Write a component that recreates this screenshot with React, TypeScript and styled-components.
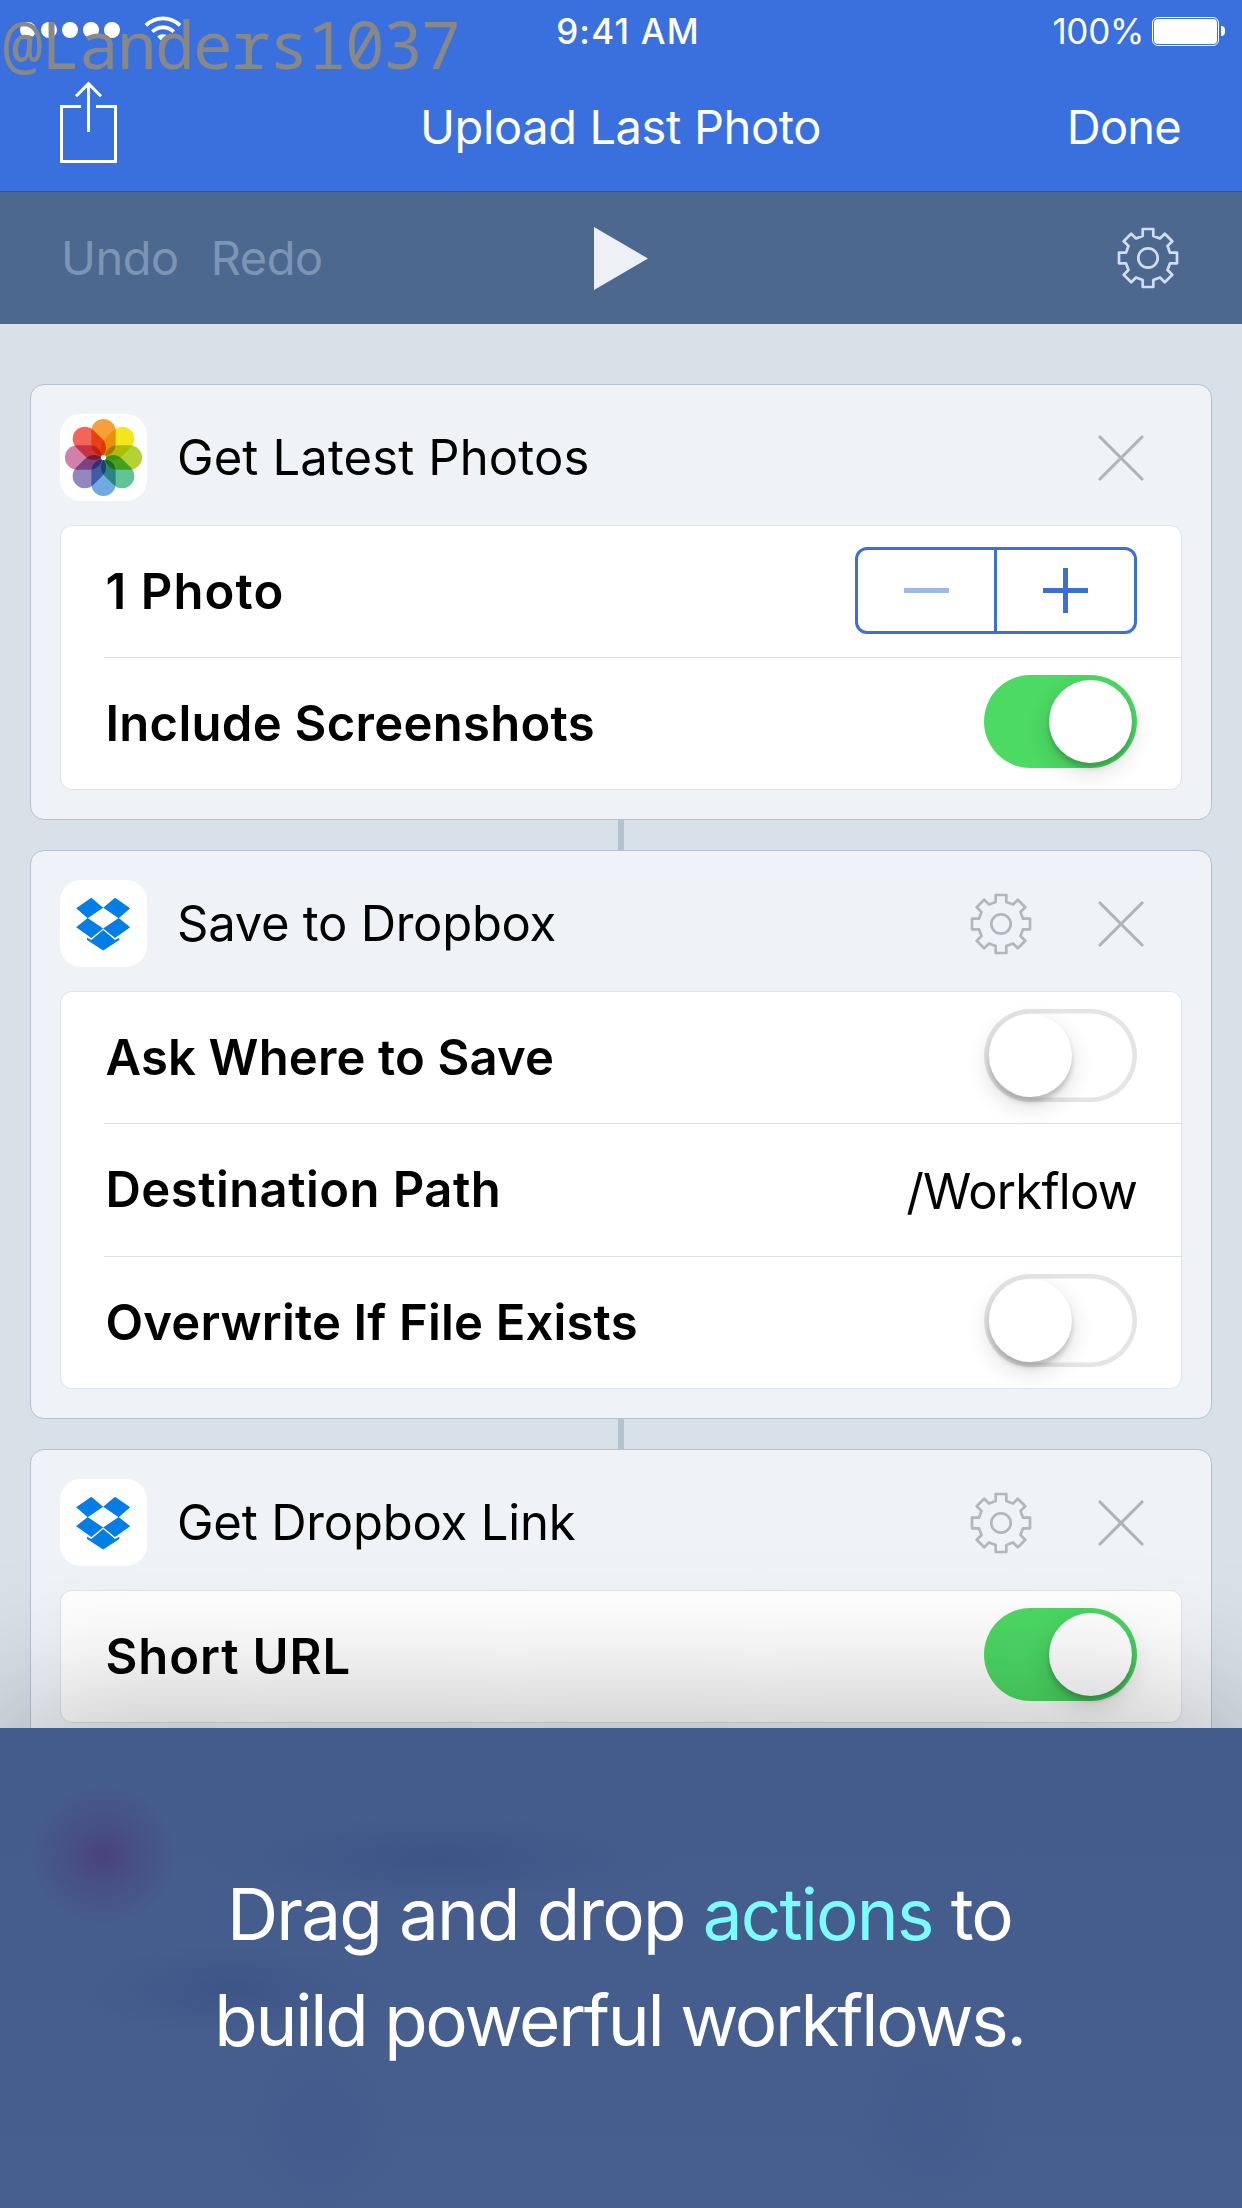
import React from 'react';
import styled, { createGlobalStyle } from 'styled-components';

const GlobalStyle = createGlobalStyle`
  *, *::before, *::after { box-sizing: border-box; }
  body {
    margin: 0;
    background: #d8e0e8;
    font-family: Inter, "Liberation Sans", sans-serif;
    color: #000;
  }
`;

const Screen = styled.div`
  position: relative;
  display: flex;
  flex-direction: column;
  width: 1242px;
  height: 2208px;
  overflow: hidden;
  background: #d8e0e8;
`;

const Header = styled.header`
  flex: none;
  height: 192px;
  display: flex;
  flex-direction: column;
  background: #3a70dd;
  border-bottom: 1px solid #2159b4;
  color: #fff;
`;

const StatusBar = styled.div`
  height: 62px;
  display: grid;
  grid-template-columns: 1fr auto 1fr;
  align-items: center;
  padding: 0 17px 0 20px;
  font-size: 35px;
  line-height: 44px;
`;

const Signal = styled.div`
  display: flex;
  align-items: center;
  gap: 5px;
  padding-bottom: 2px;
`;

const Dot = styled.span`
  width: 16px;
  height: 16px;
  border-radius: 50%;
  background: #fff;
`;

const WifiIcon = styled.svg`
  display: block;
  margin: 0 0 2px 19px;
`;

const Time = styled.div`
  padding-left: 11px;
  font-weight: 500;
  letter-spacing: 1.2px;
`;

const Power = styled.div`
  justify-self: end;
  display: flex;
  align-items: center;
  letter-spacing: -0.3px;
`;

const Battery = styled.span`
  width: 67px;
  height: 29px;
  margin-left: 8px;
  padding: 1px;
  border: 1px solid #fff;
  border-radius: 6px;
  display: flex;
`;

const BatteryFill = styled.span`
  flex: 1;
  border-radius: 4px;
  background: #fff;
`;

const BatteryCap = styled.span`
  width: 4px;
  height: 10px;
  margin-left: 2px;
  border-radius: 0 5px 5px 0;
  background: #fff;
`;

const NavBar = styled.div`
  flex: 1;
  display: grid;
  grid-template-columns: 1fr auto 1fr;
  align-items: center;
  padding: 0 61px 0 60px;
  font-size: 47px;
  line-height: 60px;
`;

const ShareIcon = styled.svg`
  display: block;
  margin-bottom: 9px;
`;

const NavTitle = styled.h1`
  margin: 0;
  font-size: inherit;
  font-weight: 400;
  letter-spacing: -0.38px;
`;

const DoneButton = styled.button`
  justify-self: end;
  padding: 0;
  border: 0;
  background: none;
  color: #fff;
  font: inherit;
  letter-spacing: -0.75px;
`;

const Toolbar = styled.div`
  flex: none;
  height: 132px;
  display: grid;
  grid-template-columns: 1fr auto 1fr;
  align-items: center;
  padding: 0 63px 0 61px;
  background: #4d688e;
`;

const History = styled.div`
  display: flex;
  gap: 32px;
`;

const HistoryButton = styled.button`
  padding: 0;
  border: 0;
  background: none;
  color: #7c95b5;
  font: inherit;
  font-size: 47px;
  line-height: 60px;
  letter-spacing: -0.5px;
`;

const PlayIcon = styled.svg`
  display: block;
  margin-left: 2px;
`;

const ToolbarEnd = styled.div`
  justify-self: end;
`;

const Glyph = styled.svg`
  display: block;
  flex: none;
`;

const Flow = styled.main`
  flex: none;
  display: flex;
  flex-direction: column;
  align-items: center;
  padding: 60px 30px;
`;

const Connector = styled.div`
  width: 6px;
  height: 30px;
  background: #b4c2cc;
`;

const Card = styled.section`
  width: 100%;
  padding: 0 29px 29px;
  border: 1px solid #b5c1ce;
  border-radius: 14px;
  background: #eff3f8;
`;

const CardHeader = styled.div`
  height: 140px;
  padding: 29px 38px 24px 0;
  display: flex;
  align-items: center;
`;

const AppIcon = styled.svg`
  display: block;
  flex: none;
  width: 87px;
  height: 87px;
  border-radius: 21px;
  background: #fff;
  isolation: isolate;
`;

const Petal = styled.rect`
  mix-blend-mode: multiply;
`;

const CardTitle = styled.h2<{ $spacing: number }>`
  flex: 1;
  margin: 0 0 0 30px;
  font-size: 49px;
  font-weight: 400;
  line-height: 60px;
  letter-spacing: ${(p) => p.$spacing}px;
  padding-top: 1px;
`;

const CardActions = styled.div`
  display: flex;
  align-items: center;
  gap: 66px;
`;

const Panel = styled.div`
  border: 1px solid #dfe4eb;
  border-bottom: 0;
  border-radius: 12px;
  background: #fff;
  box-shadow: inset 0 -1px 0 #dfe3e9;
`;

const Row = styled.div<{ $height?: number }>`
  height: ${(p) => p.$height ?? 132}px;
  margin-left: 43px;
  padding: 0 44px 0 1.5px;
  display: flex;
  align-items: center;
  justify-content: space-between;
  border-bottom: 1px solid #dcdfe2;

  &:last-child {
    border-bottom-color: transparent;
  }
`;

const RowLabel = styled.span<{ $spacing: number }>`
  font-size: 49px;
  font-weight: 600;
  line-height: 60px;
  letter-spacing: ${(p) => p.$spacing}px;
`;

const RowValue = styled.span`
  padding-top: 3px;
  font-size: 49px;
  line-height: 60px;
  letter-spacing: -0.75px;
`;

const Stepper = styled.div`
  width: 282px;
  height: 87px;
  margin-bottom: 3px;
  display: grid;
  grid-template-columns: 139px 1fr;
  border: 3px solid #4070cf;
  border-radius: 12px;
`;

const StepButton = styled.button<{ $dim?: boolean }>`
  display: grid;
  place-items: center;
  padding: 0;
  border: 0;
  background: none;
  color: ${(p) => (p.$dim ? '#a0b7e7' : '#3d6ed2')};

  &:first-child {
    border-right: 3px solid #4070cf;
  }
`;

const Track = styled.div<{ $on: boolean }>`
  flex: none;
  width: 153px;
  height: 93px;
  margin-bottom: 4px;
  padding: 5px;
  display: flex;
  justify-content: ${(p) => (p.$on ? 'flex-end' : 'flex-start')};
  border-radius: 47px;
  background: ${(p) => (p.$on ? '#4cd964' : '#fff')};
  box-shadow: inset 0 0 0 ${(p) => (p.$on ? 0 : 4.5)}px #e5e5e5;
`;

const Knob = styled.span`
  width: 83px;
  height: 83px;
  border-radius: 50%;
  background: #fff;
  box-shadow: 0 9px 24px rgba(0, 0, 0, 0.14), 0 5px 5px rgba(0, 0, 0, 0.18);
`;

const Caption = styled.div`
  position: absolute;
  left: 0;
  right: 0;
  bottom: 0;
  height: 480px;
  padding: 134px 3px 0 0;
  text-align: center;
  color: #fff;
  font-size: 71px;
  line-height: 105.5px;
  background:
    radial-gradient(ellipse 76px 72px at 103px 127px, rgba(76, 48, 108, 0.58), rgba(76, 55, 115, 0.3) 50%, rgba(76, 60, 120, 0) 100%),
    radial-gradient(ellipse 230px 44px at 440px 130px, rgba(52, 76, 126, 0.45), rgba(52, 76, 126, 0) 100%),
    radial-gradient(ellipse 150px 46px at 232px 262px, rgba(52, 76, 126, 0.45), rgba(52, 76, 126, 0) 100%),
    radial-gradient(ellipse 80px 90px at 320px 400px, rgba(60, 84, 138, 0.3), rgba(60, 84, 138, 0) 100%),
    radial-gradient(ellipse 80px 90px at 930px 390px, rgba(60, 84, 134, 0.3), rgba(60, 84, 134, 0) 100%),
    linear-gradient(#445c8c, #475f8f);
  box-shadow: 0 0 160px rgba(0, 0, 0, 0.36);
`;

const CaptionLine = styled.div<{ $spacing: number }>`
  white-space: nowrap;
  letter-spacing: ${(p) => p.$spacing}px;
`;

const Accent = styled.span`
  color: #7dfcfe;
`;

const Watermark = styled.div`
  position: absolute;
  left: 3px;
  top: 0;
  font-family: "Noto Sans Mono", "DejaVu Sans Mono", monospace;
  font-size: 66px;
  line-height: 86px;
  letter-spacing: -1.6px;
  white-space: nowrap;
  color: #888;
`;

const gearQuadrant: [number, number][] = [
  [5.3, -29], [5.3, -22], [12, -19.5], [16.8, -24.3], [24.3, -16.8], [19.5, -12], [22, -5.3], [29, -5.3],
];

const gearPoints = [0, 1, 2, 3]
  .flatMap((turn) =>
    gearQuadrant.map(([x, y]) => {
      let p = [x, y];
      for (let i = 0; i < turn; i++) p = [-p[1], p[0]];
      return p.join(',');
    }),
  )
  .join(' ');

function Gear({ color }: { color: string }) {
  return (
    <Glyph width="62" height="62" viewBox="-31 -31 62 62" fill="none" stroke={color} strokeWidth="2.7">
      <polygon points={gearPoints} strokeLinejoin="round" />
      <circle r="9.7" />
    </Glyph>
  );
}

function Close() {
  return (
    <Glyph width="46" height="46" viewBox="-23 -23 46 46" stroke="#b0b3b8" strokeWidth="3.1" strokeLinecap="round">
      <path d="M-21-21 21 21M21-21-21 21" />
    </Glyph>
  );
}

const petals = ['#f6a03a', '#f3e61c', '#b4d234', '#62c398', '#6fabe0', '#9686c0', '#d180ad', '#f3645b'];

function PhotosIcon() {
  return (
    <AppIcon viewBox="-44 -44 88 88">
      {petals.map((fill, i) => (
        <Petal key={fill} x="-12.3" y="-39" width="24.6" height="37.6" rx="12.3" fill={fill} transform={`rotate(${i * 45})`} />
      ))}
      <circle r="2.6" fill="#fff" />
    </AppIcon>
  );
}

function DropboxIcon() {
  return (
    <AppIcon viewBox="12 12 264 264" fill="#047de6">
      <path d="M61 98 107 66 143 96 96 128zM225 98 179 66 143 96 190 128z" />
      <path d="M61 155 96 127 143 159 107 188zM225 155 190 127 143 159 179 188z" />
      <path d="M143 164 179 194 192 187V194L143 226 94 194V187L107 194z" />
    </AppIcon>
  );
}

function Toggle({ on = false }: { on?: boolean }) {
  return (
    <Track $on={on} role="switch" aria-checked={on}>
      <Knob />
    </Track>
  );
}

export default function App() {
  return (
    <Screen>
      <GlobalStyle />
      <Header>
        <StatusBar>
          <Signal>
            <Dot /><Dot /><Dot /><Dot /><Dot />
            <WifiIcon width="38" height="27" viewBox="-19 -26.5 38 27" fill="none" stroke="#fff" strokeWidth="3.7">
              <path d="M-17.1-17.1A24.2 24.2 0 0 1 17.1-17.1" />
              <path d="M-10.7-10.7A15.1 15.1 0 0 1 10.7-10.7" />
              <path d="M0 0-5.9-5.9A8.3 8.3 0 0 1 5.9-5.9z" fill="#fff" stroke="none" />
            </WifiIcon>
          </Signal>
          <Time>9:41 AM</Time>
          <Power>
            100%
            <Battery><BatteryFill /></Battery>
            <BatteryCap />
          </Power>
        </StatusBar>
        <NavBar>
          <ShareIcon width="57" height="82" viewBox="0 0 57 82" fill="none" stroke="#fff" strokeWidth="3">
            <path d="M21 25.5H1.5V80.5H55.5V25.5H36" />
            <path d="M28.5 51V3M16 15.2 28.5 2.7 41 15.2" />
          </ShareIcon>
          <NavTitle>Upload Last Photo</NavTitle>
          <DoneButton>Done</DoneButton>
        </NavBar>
      </Header>

      <Toolbar>
        <History>
          <HistoryButton>Undo</HistoryButton>
          <HistoryButton>Redo</HistoryButton>
        </History>
        <PlayIcon width="54" height="63" viewBox="0 0 54 63" fill="#edf0f4">
          <path d="M0 0 54 31.5 0 63z" />
        </PlayIcon>
        <ToolbarEnd><Gear color="#cfdef2" /></ToolbarEnd>
      </Toolbar>

      <Flow>
        <Card>
          <CardHeader>
            <PhotosIcon />
            <CardTitle $spacing={0.12}>Get Latest Photos</CardTitle>
            <CardActions><Close /></CardActions>
          </CardHeader>
          <Panel>
            <Row>
              <RowLabel $spacing={1.1}>1 Photo</RowLabel>
              <Stepper>
                <StepButton $dim aria-label="Decrease">
                  <Glyph width="45" height="45" viewBox="0 0 45 45" stroke="currentColor" strokeWidth="5">
                    <path d="M0 22.5H45" />
                  </Glyph>
                </StepButton>
                <StepButton aria-label="Increase">
                  <Glyph width="45" height="45" viewBox="0 0 45 45" stroke="currentColor" strokeWidth="5">
                    <path d="M0 22.5H45M22.5 0V45" />
                  </Glyph>
                </StepButton>
              </Stepper>
            </Row>
            <Row>
              <RowLabel $spacing={0.28}>Include Screenshots</RowLabel>
              <Toggle on />
            </Row>
          </Panel>
        </Card>
        <Connector />
        <Card>
          <CardHeader>
            <DropboxIcon />
            <CardTitle $spacing={-0.28}>Save to Dropbox</CardTitle>
            <CardActions><Gear color="#b3b6bb" /><Close /></CardActions>
          </CardHeader>
          <Panel>
            <Row>
              <RowLabel $spacing={0.14}>Ask Where to Save</RowLabel>
              <Toggle />
            </Row>
            <Row $height={133}>
              <RowLabel $spacing={0.45}>Destination Path</RowLabel>
              <RowValue>/Workflow</RowValue>
            </Row>
            <Row>
              <RowLabel $spacing={0.17}>Overwrite If File Exists</RowLabel>
              <Toggle />
            </Row>
          </Panel>
        </Card>
        <Connector />
        <Card>
          <CardHeader>
            <DropboxIcon />
            <CardTitle $spacing={-0.2}>Get Dropbox Link</CardTitle>
            <CardActions><Gear color="#b3b6bb" /><Close /></CardActions>
          </CardHeader>
          <Panel>
            <Row>
              <RowLabel $spacing={0.9}>Short URL</RowLabel>
              <Toggle on />
            </Row>
          </Panel>
        </Card>
      </Flow>

      <Caption>
        <CaptionLine $spacing={-1.85}>Drag and drop <Accent>actions</Accent> to</CaptionLine>
        <CaptionLine $spacing={-2.25}>build powerful workflows.</CaptionLine>
      </Caption>
      <Watermark>@Landers1037</Watermark>
    </Screen>
  );
}
